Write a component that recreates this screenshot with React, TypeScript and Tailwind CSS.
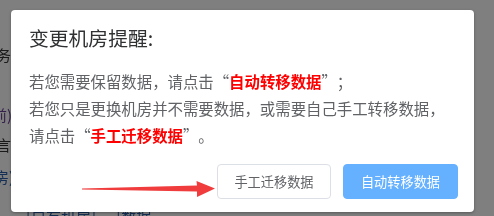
const font = { fontFamily: '"Noto Sans CJK SC", "Noto Sans", sans-serif' };

// full-width curly quote cell, like the CJK page font renders them
function Q({ children }: { children: string }) {
  return <span className="inline-block w-[15.4px] text-center">{children}</span>;
}

function BackgroundPage() {
  return (
    <div className="flex flex-col text-[15px] leading-[20px] text-[#333]">
      <div className="h-[45px]" />
      <div className="-ml-[4px]">务务</div>
      <div className="h-[40px]" />
      <div className="-ml-[8px] text-[#6a3d9a]">前)</div>
      <div className="h-[10px]" />
      <div className="-ml-[4px]">言十</div>
      <div className="h-[12px]" />
      <div className="-ml-[6px] text-[#2a5ca8]">房)</div>
      <div className="h-[10px]" />
      <div className="-ml-[9px]">)</div>
      <div className="-mt-[10px] pl-[26px] flex gap-[20px] text-[#2a5ca8]">
        <span>[自有机房]</span>
        <span>[数据</span>
      </div>
    </div>
  );
}

function Arrow() {
  return (
    <svg className="absolute left-0 top-0" width="494" height="216" viewBox="0 0 494 216">
      <polygon
        points="82,188.6 197,185.6 196.5,181 215,188.5 197,197 197,191.6 82,189.6"
        fill="#f03c3c"
      />
    </svg>
  );
}

export default function App() {
  return (
    <div className="relative w-[494px] h-[216px] overflow-hidden bg-white" style={font}>
      <BackgroundPage />
      {/* mask */}
      <div className="absolute inset-0 bg-[#7f7f7f] mix-blend-multiply" />
      {/* dialog */}
      <div className="absolute left-[11px] top-[10px] w-[463px] h-[202px] bg-white rounded-[4px] shadow-[0_1px_3px_rgba(0,0,0,0.3)] px-[18px] flex flex-col">
        <div className="pt-[16px] h-[40px] text-[19.8px] leading-[24px] text-[#303133]">
          变更机房提醒:
        </div>
        <div className="mt-[18px] text-[15.4px] leading-[27px] text-[#606266]">
          <div>
            若您需要保留数据，请点击<Q>“</Q>
            <span className="text-[#ff0000] font-bold">自动转移数据</span>
            <Q>”</Q>；
          </div>
          <div>若您只是更换机房并不需要数据，或需要自己手工转移数据，</div>
          <div>
            请点击<Q>“</Q>
            <span className="text-[#ff0000] font-bold">手工迁移数据</span>
            <Q>”</Q>。
          </div>
        </div>
        <div className="mt-[15px] flex justify-end gap-[12px] -mr-[2px]">
          <button className="h-[35px] w-[114px] rounded-[4px] border border-[#dcdfe6] bg-white text-[13.2px] text-[#606266]">
            手工迁移数据
          </button>
          <button className="h-[35px] w-[115px] rounded-[4px] border border-[#66b1ff] bg-[#66b1ff] text-[13.2px] text-white">
            自动转移数据
          </button>
        </div>
      </div>
      <Arrow />
    </div>
  );
}
